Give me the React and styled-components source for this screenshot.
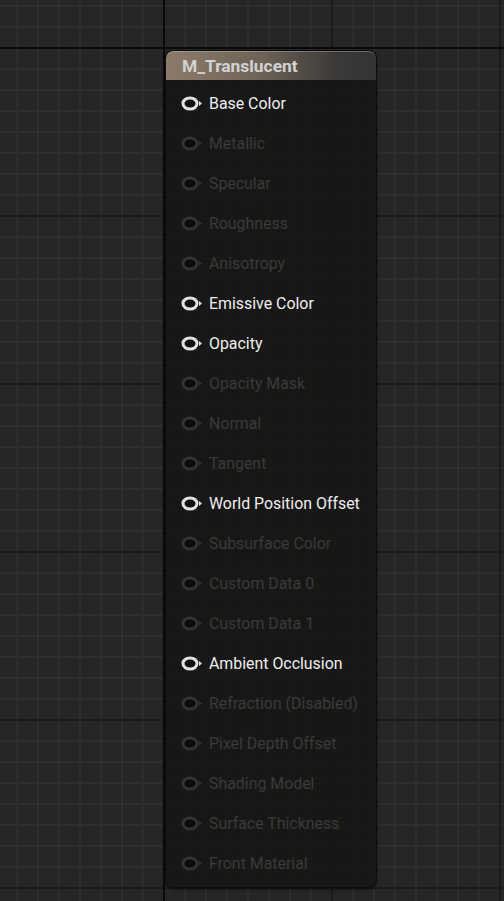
import styled, { createGlobalStyle } from 'styled-components';

const GlobalStyle = createGlobalStyle`
  html, body {
    margin: 0;
    padding: 0;
    background: #262626;
  }
  body {
    font-family: Roboto, "Noto Sans", sans-serif;
  }
`;

const Canvas = styled.div`
  position: relative;
  width: 504px;
  height: 901px;
  overflow: hidden;
  background-color: #262626;
  background-image:
    linear-gradient(to right, transparent 163px, #0a0a0a 163px, #0a0a0a 165px, transparent 165px),
    linear-gradient(to bottom, transparent 47px, #0a0a0a 47px, #0a0a0a 49px, transparent 49px),
    repeating-linear-gradient(to right, transparent 0, transparent 163px, #1b1b1b 163px, #1b1b1b 165px, transparent 165px, transparent 168px),
    repeating-linear-gradient(to bottom, transparent 0, transparent 47px, #1b1b1b 47px, #1b1b1b 49px, transparent 49px, transparent 168px),
    repeating-linear-gradient(to right, transparent 0, transparent 16px, #2e2e2e 16px, #2e2e2e 18px, transparent 18px, transparent 21px),
    repeating-linear-gradient(to bottom, transparent 0, transparent 5px, #2e2e2e 5px, #2e2e2e 7px, transparent 7px, transparent 21px);
`;

const Node = styled.div`
  position: absolute;
  left: 166px;
  top: 51px;
  width: 210px;
  height: 836px;
  box-sizing: border-box;
  border-radius: 7px;
  background: rgba(22, 23, 21, 0.9);
  box-shadow: 0 0 0 1px #0b0b0b, 0 2px 4px rgba(0, 0, 0, 0.6);
  display: flex;
  flex-direction: column;
  overflow: hidden;
`;

const Header = styled.div`
  height: 29px;
  flex: none;
  display: flex;
  align-items: center;
  padding-left: 16px;
  border-radius: 7px 7px 0 0;
  background: linear-gradient(to right, #8c7b69 0%, #6e6357 45%, #3c3a38 80%, #333333 100%);
  box-shadow: inset 0 1px 0 rgba(255, 255, 255, 0.25);
  color: #d2d2d2;
  font-size: 17.4px;
  font-weight: 700;
`;

const Pins = styled.div`
  display: flex;
  flex-direction: column;
  padding-top: 3px;
`;

const Row = styled.div`
  height: 40px;
  display: flex;
  align-items: center;
  gap: 6px;
  padding-left: 15px;
  font-size: 15.9px;
  color: ${(p) => (p.$active ? '#ededed' : '#3a3a3a')};
`;

const Pin = ({ active }) => {
  const ring = active ? '#e2e2e2' : '#323232';
  return (
    <svg width="22" height="15" viewBox="0 0 22 15">
      <ellipse cx="9" cy="7.5" rx="7" ry="5.6" fill="#0c0c0c" stroke={ring} strokeWidth="3" />
      <path d="M18 5 L21 7.5 L18 10 Z" fill={ring} />
    </svg>
  );
};

const pins = [
  ['Base Color', true],
  ['Metallic', false],
  ['Specular', false],
  ['Roughness', false],
  ['Anisotropy', false],
  ['Emissive Color', true],
  ['Opacity', true],
  ['Opacity Mask', false],
  ['Normal', false],
  ['Tangent', false],
  ['World Position Offset', true],
  ['Subsurface Color', false],
  ['Custom Data 0', false],
  ['Custom Data 1', false],
  ['Ambient Occlusion', true],
  ['Refraction (Disabled)', false],
  ['Pixel Depth Offset', false],
  ['Shading Model', false],
  ['Surface Thickness', false],
  ['Front Material', false],
];

const App = () => {
  return (
    <>
      <GlobalStyle />
      <Canvas>
        <Node>
          <Header>M_Translucent</Header>
          <Pins>
            {pins.map(([label, active]) => (
              <Row key={label} $active={active}>
                <Pin active={active} />
                {label}
              </Row>
            ))}
          </Pins>
        </Node>
      </Canvas>
    </>
  );
};

export default App;
